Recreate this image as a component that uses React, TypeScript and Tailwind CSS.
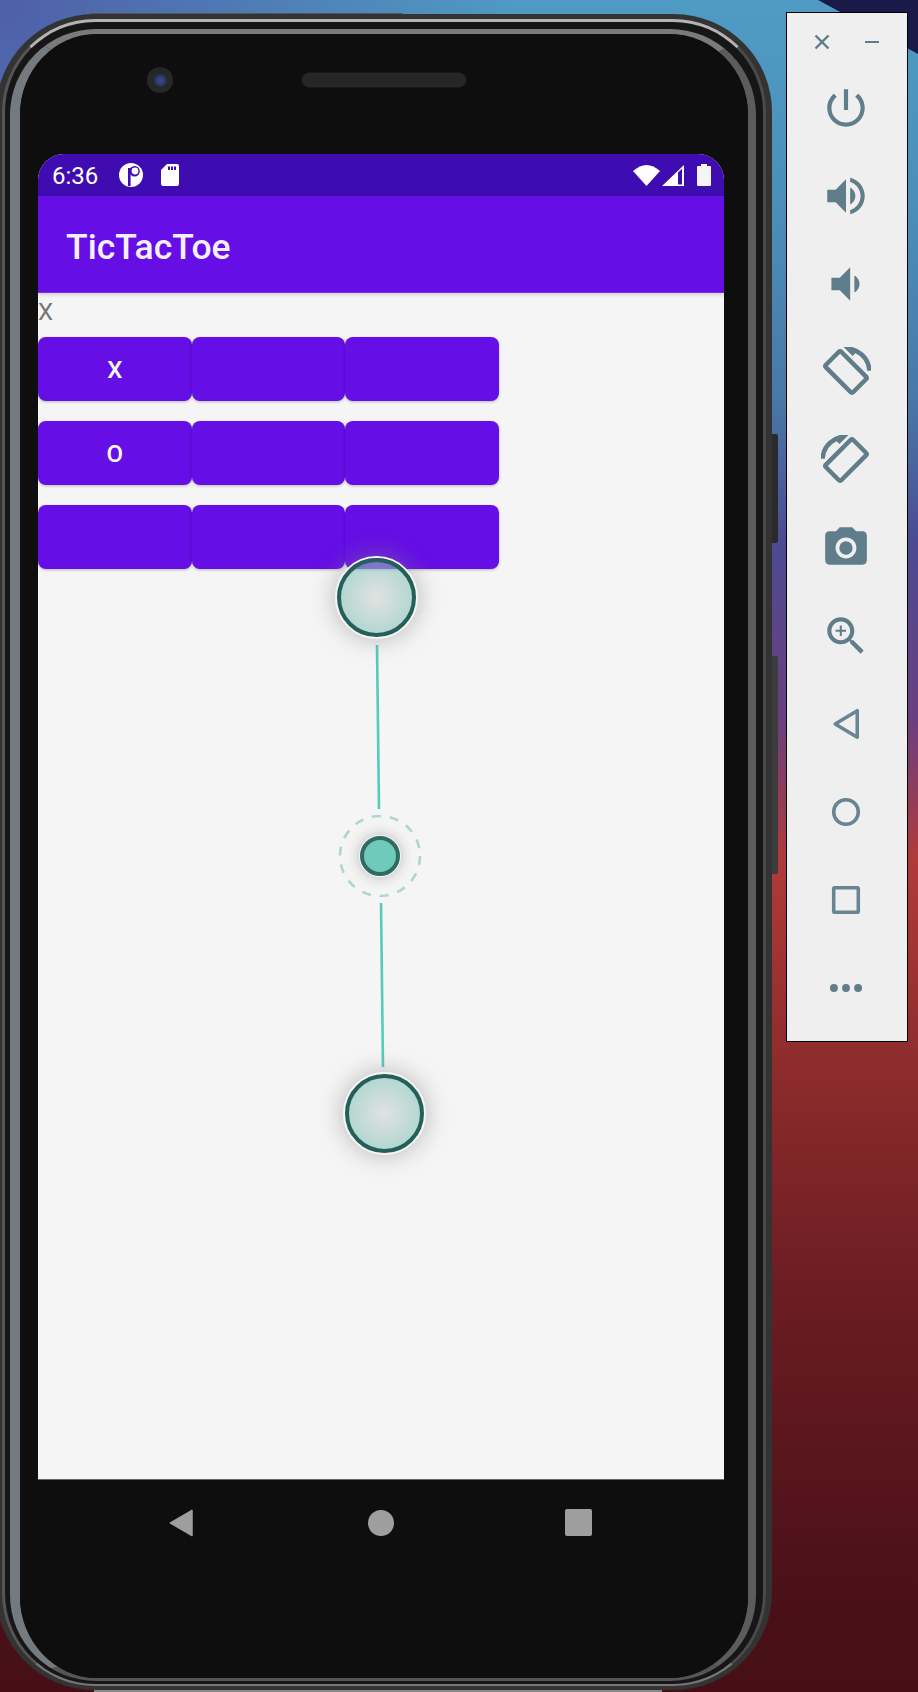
import React from 'react';

const rotatePath =
  'M16.48 2.52c3.27 1.55 5.61 4.72 5.97 8.48h1.5C23.44 4.84 18.29 0 12 0l-.66.03 3.81 3.81 1.33-1.32zm-6.25-.77c-.59-.59-1.54-.59-2.12 0L1.75 8.11c-.59.59-.59 1.54 0 2.12l12.02 12.02c.59.59 1.54.59 2.12 0l6.36-6.36c.59-.59.59-1.54 0-2.12L10.23 1.75zm4.6 19.44L2.81 9.17l6.36-6.36 12.02 12.02-6.36 6.36z';

const toolbarIcons = [
  // power
  <path key="p" d="M13 3h-2v10h2V3zm4.83 2.17l-1.42 1.42C17.99 7.86 19 9.81 19 12c0 3.87-3.13 7-7 7s-7-3.13-7-7c0-2.19 1.01-4.14 2.58-5.42L6.17 5.17C4.23 6.82 3 9.26 3 12c0 4.97 4.03 9 9 9s9-4.03 9-9c0-2.74-1.23-5.18-3.17-6.83z" />,
  // volume up
  <path key="vu" d="M3 9v6h4l5 5V4L7 9H3zm13.5 3c0-1.77-1.02-3.29-2.5-4.03v8.05c1.48-.73 2.5-2.25 2.5-4.02zM14 3.23v2.06c2.89.86 5 3.54 5 6.71s-2.11 5.85-5 6.71v2.06c4.01-.91 7-4.49 7-8.77s-2.99-7.86-7-8.77z" />,
  // volume down
  <path key="vd" d="M18.5 12c0-1.77-1.02-3.29-2.5-4.03v8.05c1.48-.73 2.5-2.25 2.5-4.02zM5 9v6h4l5 5V4L9 9H5z" />,
  // rotate right
  <path key="rr" d={rotatePath} stroke="#607d8b" strokeWidth="0.7" />,
  // rotate left
  <path key="rl" transform="matrix(-1 0 0 1 24 0)" d={rotatePath} stroke="#607d8b" strokeWidth="0.7" />,
  // camera
  <g key="c">
    <circle cx="12" cy="12" r="3.2" />
    <path d="M9 2L7.17 4H4c-1.1 0-2 .9-2 2v12c0 1.1.9 2 2 2h16c1.1 0 2-.9 2-2V6c0-1.1-.9-2-2-2h-3.17L15 2H9zm3 15c-2.76 0-5-2.24-5-5s2.24-5 5-5 5 2.24 5 5-2.24 5-5 5z" />
  </g>,
  // zoom
  <g key="z">
    <path d="M15.5 14h-.79l-.28-.27C15.41 12.59 16 11.11 16 9.5 16 5.91 13.09 3 9.5 3S3 5.91 3 9.5 5.91 16 9.5 16c1.61 0 3.09-.59 4.23-1.57l.27.28v.79l5 4.99L20.49 19l-4.99-5zm-6 0C7.01 14 5 11.99 5 9.5S7.01 5 9.5 5 14 7.01 14 9.5 11.99 14 9.5 14z" />
    <path d="M12 10h-2v2H9v-2H7V9h2V7h1v2h2v1z" />
  </g>,
  // back
  <path key="b" d="M17.4 5.6V18.4L6.8 12Z" fill="none" stroke="#688592" strokeWidth="1.7" strokeLinejoin="round" />,
  // home
  <circle key="h" cx="12" cy="12" r="5.9" fill="none" stroke="#688592" strokeWidth="1.7" />,
  // overview
  <rect key="o" x="6.1" y="6.1" width="11.8" height="11.8" rx="0.5" fill="none" stroke="#688592" strokeWidth="1.7" />,
  // more
  <g key="m">
    <circle cx="6.2" cy="12" r="1.9" />
    <circle cx="12" cy="12" r="1.9" />
    <circle cx="17.8" cy="12" r="1.9" />
  </g>,
];

const board = [
  ['X', '', ''],
  ['O', '', ''],
  ['', '', ''],
];

function Handle({ className }: { className: string }) {
  return (
    <div className={`absolute w-[83px] h-[83px] rounded-full border-[2px] border-[#f4f4f4] shadow-[0_0_24px_rgba(130,130,130,0.55)] ${className}`}>
      <div className="w-full h-full rounded-full border-[4px] border-[#245f5a] bg-[radial-gradient(circle,rgba(210,210,210,0.55),rgba(105,188,175,0.6))]" />
    </div>
  );
}

export default function App() {
  return (
    <div className="relative flex items-start w-[918px] h-[1692px] overflow-hidden font-['Roboto',sans-serif] bg-[radial-gradient(circle_at_0_0,#4f5fa8,rgba(79,95,168,0)_520px),linear-gradient(180deg,#4f9bc4_0px,#4b8fbb_200px,#4878a8_400px,#4c4b92_540px,#6a3f80_720px,#b03a3a_860px,#8e2c2c_1060px,#6a1c22_1300px,#4a1018_1600px,#460f16_1692px)]">
      {/* wallpaper corner */}
      <div className="absolute right-0 top-0 w-[100px] h-[54px] bg-[#1a1a48] [clip-path:polygon(0_0,100%_0,100%_100%)]" />

      {/* Phone */}
      <div className="relative flex flex-col shrink-0 w-[776px] -ml-[4px]">
        <div className="ml-[94px] mt-[13px] w-[313px] h-[1px] bg-[#555555]" />
        <div className="h-[1676px] rounded-[98px] bg-[#333333] pt-[5px] pr-[6px] pb-[4px] pl-[6px]">
          <div className="h-full rounded-[93px] border-t-[3px] border-b-[2px] border-x-[3px] border-t-[#b4b4b4] border-b-[#777777] border-l-[#555555] border-r-[#4a4a4a] bg-[#161616] pt-[7px] pr-[7px] pb-[3px] pl-[5px]">
            <div className="h-full rounded-[86px] border-t-[5px] border-b-[3px] border-l-[10px] border-r-[8px] border-t-[#7a7a7a] border-b-[#555555] border-l-[#757a80] border-r-[#5c5c5c] bg-[#0e0e0e]">
              <div className="flex flex-col h-full rounded-[80px] bg-[#0e0e0e] pl-[18px] pr-[24px]">
                {/* Camera and speaker */}
                <div className="flex items-center h-[92px] mb-[28px] pl-[109px] gap-[128px]">
                  <div className="flex items-center justify-center w-[26px] h-[26px] rounded-full bg-[#272727]">
                    <div className="w-[13px] h-[13px] rounded-full bg-[radial-gradient(circle,#3f4f88,#1a2240)]" />
                  </div>
                  <div className="w-[166px] h-[16px] rounded-full bg-[#262626] border border-[#181818]" />
                </div>

                {/* Screen */}
                <div className="flex flex-col h-[1326px] rounded-t-[26px] overflow-hidden bg-[#f5f5f5] border-b border-[#666666]">
                  <div className="flex items-center justify-between h-[42px] pl-[14px] pr-[13px] bg-[#3e0cb0] text-white">
                    <div className="flex items-center">
                      <span className="text-[24px] w-[67px] pt-[2px]">6:36</span>
                      <svg width="24" height="24" viewBox="0 0 24 24">
                        <circle cx="12" cy="12" r="12" fill="#fff" />
                        <rect x="9" y="5" width="2.6" height="18" fill="#3e0cb0" />
                        <circle cx="15.6" cy="8.2" r="5.2" fill="#3e0cb0" />
                        <circle cx="16" cy="8" r="3.4" fill="#fff" />
                      </svg>
                      <svg className="ml-[18px]" width="18" height="22" viewBox="0 0 18 22">
                        <path d="M6 0H16a2 2 0 0 1 2 2V20a2 2 0 0 1-2 2H2a2 2 0 0 1-2-2V6Z" fill="#fff" />
                        <rect x="7" y="2.5" width="2" height="3.5" fill="#3e0cb0" />
                        <rect x="10" y="2.5" width="2" height="3.5" fill="#3e0cb0" />
                        <rect x="13" y="2.5" width="2" height="3.5" fill="#3e0cb0" />
                      </svg>
                    </div>
                    <div className="flex items-center">
                      <svg width="27" height="21" viewBox="0 0 27 21">
                        <path d="M0 6Q13.5 -6 27 6L13.5 21Z" fill="#fff" />
                      </svg>
                      <svg className="ml-[2px]" width="22" height="21" viewBox="0 0 22 21">
                        <path fillRule="evenodd" d="M0 21L22 0V21ZM16 7.5V19.5H20V3.7Z" fill="#fff" />
                      </svg>
                      <svg className="ml-[13px]" width="14" height="22" viewBox="0 0 14 22">
                        <path d="M4 0H10V2H13a1 1 0 0 1 1 1V21a1 1 0 0 1-1 1H1a1 1 0 0 1-1-1V3a1 1 0 0 1 1-1H4Z" fill="#f5f5f5" />
                      </svg>
                    </div>
                  </div>

                  <div className="flex items-center h-[97px] pl-[28px] pt-[7px] bg-[#650ee5] text-[#f5f0fd] text-[35.5px] font-medium shadow-[0_2px_4px_rgba(0,0,0,0.15)] border-b border-[#7a2cf0] z-10">
                    TicTacToe
                  </div>

                  {/* Content */}
                  <div className="relative flex-1">
                    <div className="h-[38px] text-[24px] leading-[38px] text-[#757575]">X</div>
                    <div className="flex flex-col gap-[20px] mt-[6px] w-[461px]">
                      {board.map((row, r) => (
                        <div key={r} className="grid grid-cols-3 h-[64px]">
                          {row.map((cell, c) => (
                            <div
                              key={c}
                              className="flex items-center justify-center pt-[2px] rounded-[8px] bg-[#650ee5] text-white text-[24px] font-medium shadow-[0_1px_3px_rgba(0,0,0,0.25)]"
                            >
                              {cell}
                            </div>
                          ))}
                        </div>
                      ))}
                    </div>

                    {/* Drag handles over the app */}
                    <svg className="absolute left-0 top-0" width="686" height="1186" viewBox="0 0 686 1186" fill="none">
                      <line x1="339" y1="352" x2="341" y2="516" stroke="#55cbb9" strokeWidth="2.6" />
                      <line x1="343" y1="610" x2="345" y2="774" stroke="#55cbb9" strokeWidth="2.6" />
                      <circle cx="342" cy="563" r="40" stroke="#b0d5cf" strokeWidth="2.6" strokeDasharray="9 9" />
                    </svg>
                    <Handle className="left-[297px] top-[263px]" />
                    <Handle className="left-[305px] top-[779px]" />
                    <div className="absolute left-[321px] top-[542px] w-[42px] h-[42px] rounded-full border-[1.5px] border-[#f4f4f4] shadow-[0_0_14px_rgba(130,130,130,0.55)]">
                      <div className="w-full h-full rounded-full border-[4.5px] border-[#2f6b63] bg-[#6fcabb]" />
                    </div>
                  </div>
                </div>

                {/* Android nav */}
                <div className="flex items-center justify-between h-[85px] pl-[131px] pr-[132px]">
                  <svg width="24" height="28" viewBox="0 0 24 28">
                    <path d="M23 1.5V26.5L1.5 14Z" fill="#9e9e9e" stroke="#9e9e9e" strokeWidth="1.5" strokeLinejoin="round" />
                  </svg>
                  <div className="w-[26px] h-[26px] ml-[4px] rounded-full bg-[#9e9e9e]" />
                  <div className="w-[27px] h-[27px] rounded-[2px] bg-[#9e9e9e]" />
                </div>
              </div>
            </div>
          </div>
        </div>
        <div className="ml-[98px] w-[568px] h-[2px] bg-[#8a8a8a]" />
      </div>

      {/* Side buttons */}
      <div className="flex flex-col shrink-0 w-[6px]">
        <div className="mt-[434px] h-[109px] rounded-r-[2px] bg-[#2a2a2a]" />
        <div className="mt-[113px] h-[218px] rounded-r-[2px] bg-[#3c3c3c]" />
      </div>

      {/* Emulator toolbar */}
      <div className="relative flex flex-col items-center shrink-0 w-[122px] h-[1030px] mt-[12px] ml-[8px] pr-[2px] bg-[#efefef] border-[1.5px] border-black">
        <div className="flex items-center justify-between w-full h-[58px] pl-[27px] pr-[26px]">
          <svg width="16" height="16" viewBox="0 0 16 16" stroke="#607d8b" strokeWidth="2.4">
            <line x1="1.5" y1="1.5" x2="14.5" y2="14.5" />
            <line x1="14.5" y1="1.5" x2="1.5" y2="14.5" />
          </svg>
          <div className="w-[14px] h-[2.5px] bg-[#607d8b]" />
        </div>
        <div className="flex flex-col gap-[38px] mt-[12px]">
          {toolbarIcons.map((icon, i) => (
            <svg key={i} width="50" height="50" viewBox="0 0 24 24" fill="#607d8b">
              {icon}
            </svg>
          ))}
        </div>
      </div>
    </div>
  );
}
